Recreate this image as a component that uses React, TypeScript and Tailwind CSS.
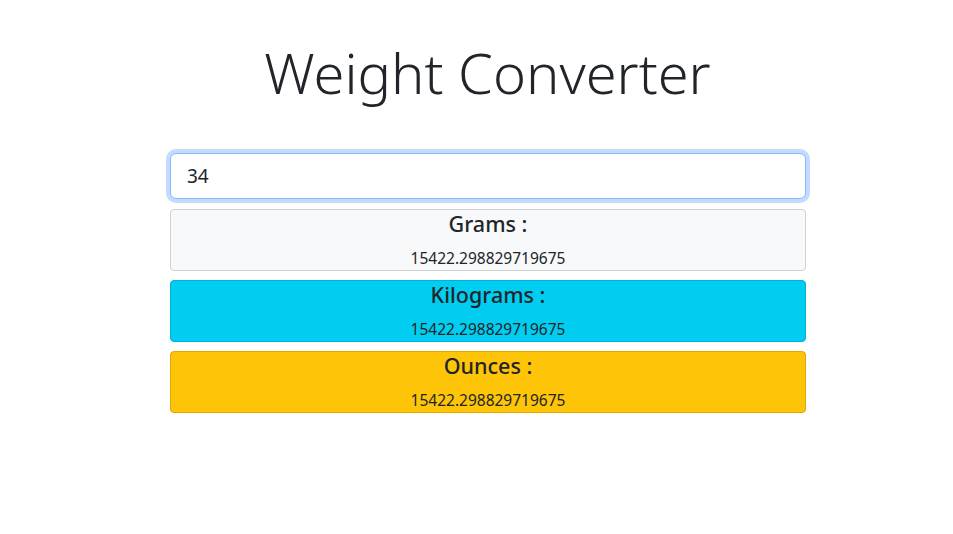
import { useState } from "react";

const value = "15422.298829719675";

const units = [
  { label: "Grams :", box: "bg-[#f8f9fa] border-[#cfd1d3]" },
  { label: "Kilograms :", box: "bg-[#00cdef] border-[#00b3d1]" },
  { label: "Ounces :", box: "bg-[#fec407] border-[#e0aa00]" },
];

export default function App() {
  const [weight, setWeight] = useState("34");

  return (
    <div className="min-h-screen bg-white text-[#212529] font-['Noto_Sans',sans-serif]">
      <h1 className="pt-[34px] pl-[22px] text-center text-[56px] font-light leading-[76px] tracking-[0px]">
        Weight Converter
      </h1>
      <div className="ml-[170px] mt-[43px] w-[636px]">
        <input
          value={weight}
          onChange={(e) => setWeight(e.target.value)}
          autoFocus
          className="block h-[46px] w-full rounded-[6px] border border-[#86b7fe] bg-white px-4 text-[19px] text-[#212529] outline-none ring-4 ring-[#c2dbfe]"
        />
        <div className="mt-[10px] flex flex-col gap-[9px]">
          {units.map((u) => (
            <div
              key={u.label}
              className={`flex h-[62px] flex-col items-center rounded-[4px] border ${u.box}`}
            >
              <div className="text-[21.5px] font-medium leading-[28px]">{u.label}</div>
              <div className="mt-[10px] text-[15.5px] leading-[20px]">{value}</div>
            </div>
          ))}
        </div>
      </div>
    </div>
  );
}
